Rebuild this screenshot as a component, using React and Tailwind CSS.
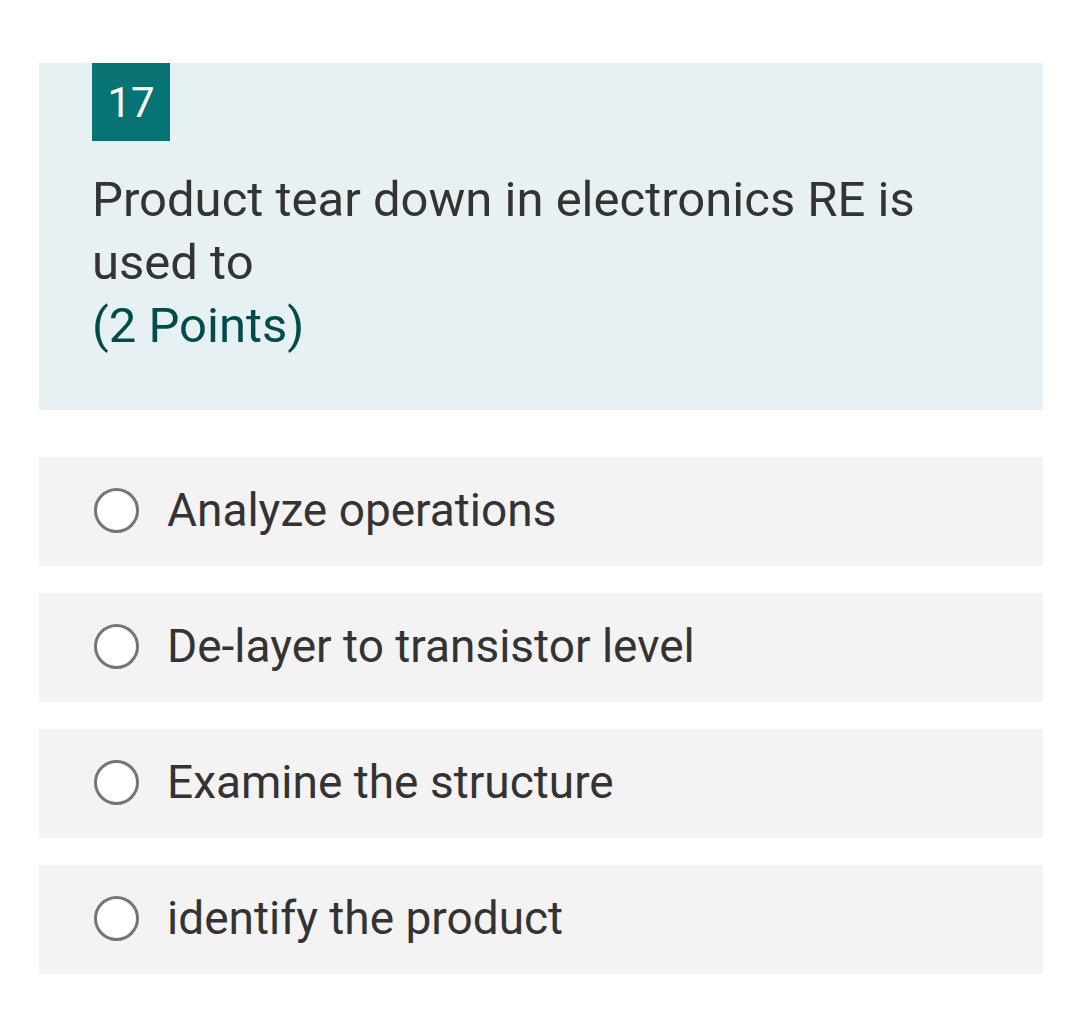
const options = [
    "Analyze operations",
    "De-layer to transistor level",
    "Examine the structure",
    "identify the product"
];

const Option = ({ label }) => (
    <div className="flex items-center h-[109px] bg-[#f3f3f3] pl-[55px] pb-[3px]">
        <span className="w-[45px] h-[45px] rounded-full border-[3px] border-[#757575] bg-white shrink-0" />
        <span className="ml-[28px] text-[46px] text-[#333333] leading-none">{label}</span>
    </div>
);

export default function App() {
    return (
        <div className="bg-white min-h-[1028px] pl-[39px] pt-[63px]" style={{ fontFamily: "Roboto, sans-serif" }}>
            <div className="w-[1004px]">
                <div className="bg-[#e7f0f3] h-[347px] pl-[53px]">
                    <div className="w-[78px] h-[78px] bg-[#077373] text-white text-[42px] flex items-center justify-center">17</div>
                    <div className="mt-[27px] text-[49px] leading-[63px] text-[#333333] w-[860px]">
                        Product tear down in electronics RE is used to
                    </div>
                    <div className="text-[49px] leading-[63px] text-[#004c4c]">(2 Points)</div>
                </div>
                <div className="mt-[47px] flex flex-col gap-[27px]">
                    {options.map((o) => (
                        <Option key={o} label={o} />
                    ))}
                </div>
            </div>
        </div>
    );
}
